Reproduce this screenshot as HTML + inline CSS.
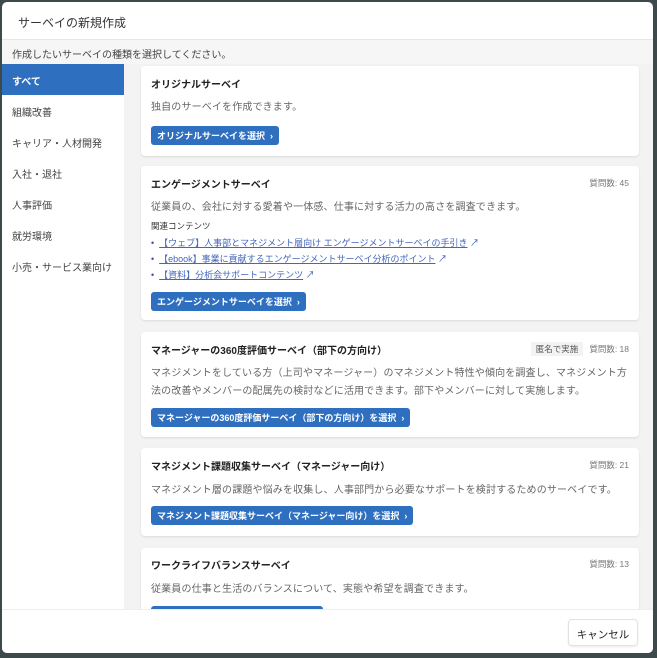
<!DOCTYPE html>
<html><head><meta charset="utf-8"><style>
*{box-sizing:border-box;margin:0;padding:0}
body{width:657px;height:658px;background:#3c4a4c;font-family:"Liberation Sans","Noto Sans CJK JP",sans-serif;position:relative;overflow:hidden;color:#222}
.modal{position:absolute;left:2px;top:2px;width:651px;height:651px;background:#fff;border-radius:5px;overflow:hidden}
.hdr{position:absolute;left:0;top:0;width:100%;height:38px;border-bottom:1px solid #e6e6e6;font-size:12px;padding:12px 0 0 16px;color:#333}
.sub{position:absolute;left:0;top:38px;width:100%;height:24px;background:#f6f6f6;font-size:10px;color:#444;padding:6px 0 0 10px}
.side{position:absolute;left:0;top:62px;width:122px;height:545px;background:#fff}
.side div{height:31px;font-size:10px;color:#444;padding:9px 0 0 10px}
.side .act{background:#2f6fbf;color:#fff;font-weight:bold}
.arrow{position:absolute;left:122px;top:72px;width:0;height:0;border-top:4px solid transparent;border-bottom:4px solid transparent;border-left:4px solid #2f6fbf}
.main{position:absolute;left:122px;top:62px;width:529px;height:545px;background:#f3f3f3}
.card{position:absolute;left:17px;width:498px;background:#fff;border-radius:4px;box-shadow:0 1px 2px rgba(0,0,0,.1);padding:0 10px}
.t{position:absolute;left:10px;font-size:10px;font-weight:bold;color:#222}
.d{position:absolute;left:10px;right:10px;font-size:10px;letter-spacing:.15px;color:#666;line-height:18px}
.n{position:absolute;right:10px;font-size:8.5px;color:#777}
.btn{position:absolute;left:10px;height:19px;background:#2f6fbf;color:#fff;font-size:9px;font-weight:bold;border-radius:3px;padding:3px 6px 0 6px;white-space:nowrap}
.rel{position:absolute;left:10px;font-size:8.5px;color:#333}
.lk{position:absolute;left:10px;font-size:9px;color:#3355aa;white-space:nowrap}
.lk span{text-decoration:underline;color:#4466bb}
.foot{position:absolute;left:0;top:607px;width:100%;height:44px;background:#fff;border-top:1px solid #eee}
.cancel{position:absolute;left:566px;top:617px;width:70px;height:27px;border:1px solid #e2e2e2;border-radius:4px;font-size:10.5px;color:#222;text-align:center;padding-top:7px;background:#fff;box-shadow:0 1px 2px rgba(0,0,0,.08)}
</style></head><body>
<div class="modal">
<div class="hdr">サーベイの新規作成</div>
<div class="sub">作成したいサーベイの種類を選択してください。</div>
<div class="side">
<div class="act">すべて</div><div>組織改善</div><div>キャリア・人材開発</div><div>入社・退社</div><div>人事評価</div><div>就労環境</div><div>小売・サービス業向け</div>
</div>
<div class="arrow"></div>
<div class="main">
<div class="card" style="top:2px;height:90px">
<div class="t" style="top:10px">オリジナルサーベイ</div>
<div class="d" style="top:33px">独自のサーベイを作成できます。</div>
<div class="btn" style="top:60px">オリジナルサーベイを選択 &nbsp;›</div>
</div>
<div class="card" style="top:102px;height:154px">
<div class="t" style="top:10px">エンゲージメントサーベイ</div>
<div class="n" style="top:11px">質問数: 45</div>
<div class="d" style="top:33px">従業員の、会社に対する愛着や一体感、仕事に対する活力の高さを調査できます。</div>
<div class="rel" style="top:54px">関連コンテンツ</div>
<div class="lk" style="top:70px">• &nbsp;<span>【ウェブ】人事部とマネジメント層向け エンゲージメントサーベイの手引き</span> ↗</div>
<div class="lk" style="top:86px">• &nbsp;<span>【ebook】事業に貢献するエンゲージメントサーベイ分析のポイント</span> ↗</div>
<div class="lk" style="top:102px">• &nbsp;<span>【資料】分析会サポートコンテンツ</span> ↗</div>
<div class="btn" style="top:126px">エンゲージメントサーベイを選択 &nbsp;›</div>
</div>
<div class="card" style="top:268px;height:105px">
<div class="t" style="top:10px">マネージャーの360度評価サーベイ（部下の方向け）</div>
<div class="n" style="top:11px"><span style="background:#f3f3f3;color:#555;padding:2px 5px;margin-right:6px">匿名で実施</span>質問数: 18</div>
<div class="d" style="top:33px">マネジメントをしている方（上司やマネージャー）のマネジメント特性や傾向を調査し、マネジメント方法の改善やメンバーの配属先の検討などに活用できます。部下やメンバーに対して実施します。</div>
<div class="btn" style="top:76px">マネージャーの360度評価サーベイ（部下の方向け）を選択 &nbsp;›</div>
</div>
<div class="card" style="top:384px;height:88px">
<div class="t" style="top:10px">マネジメント課題収集サーベイ（マネージャー向け）</div>
<div class="n" style="top:11px">質問数: 21</div>
<div class="d" style="top:34px">マネジメント層の課題や悩みを収集し、人事部門から必要なサポートを検討するためのサーベイです。</div>
<div class="btn" style="top:58px">マネジメント課題収集サーベイ（マネージャー向け）を選択 &nbsp;›</div>
</div>
<div class="card" style="top:484px;height:80px">
<div class="t" style="top:9px">ワークライフバランスサーベイ</div>
<div class="n" style="top:10px">質問数: 13</div>
<div class="d" style="top:33px">従業員の仕事と生活のバランスについて、実態や希望を調査できます。</div>
<div class="btn" style="top:58px;width:172px"></div>
</div>
</div>
<div class="foot"></div>
<div class="cancel">キャンセル</div>
</div>
</body></html>
